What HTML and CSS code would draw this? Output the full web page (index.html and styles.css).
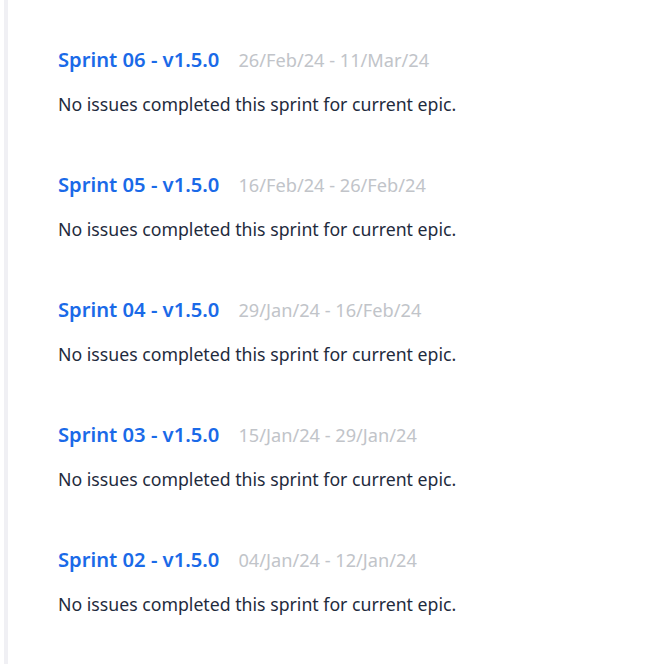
FILE: index.html
```html
<!DOCTYPE html>
<html>
<head>
<meta charset="utf-8">
<link rel="stylesheet" href="styles.css">
</head>
<body>
<div class="panel">
  <section class="sprint">
    <div class="head"><span class="name">Sprint 06 - v1.5.0</span><span class="dates">26/Feb/24 - 11/Mar/24</span></div>
    <p class="empty">No issues completed this sprint for current epic.</p>
  </section>
  <section class="sprint">
    <div class="head"><span class="name">Sprint 05 - v1.5.0</span><span class="dates">16/Feb/24 - 26/Feb/24</span></div>
    <p class="empty">No issues completed this sprint for current epic.</p>
  </section>
  <section class="sprint">
    <div class="head"><span class="name">Sprint 04 - v1.5.0</span><span class="dates">29/Jan/24 - 16/Feb/24</span></div>
    <p class="empty">No issues completed this sprint for current epic.</p>
  </section>
  <section class="sprint">
    <div class="head"><span class="name">Sprint 03 - v1.5.0</span><span class="dates">15/Jan/24 - 29/Jan/24</span></div>
    <p class="empty">No issues completed this sprint for current epic.</p>
  </section>
  <section class="sprint">
    <div class="head"><span class="name">Sprint 02 - v1.5.0</span><span class="dates">04/Jan/24 - 12/Jan/24</span></div>
    <p class="empty">No issues completed this sprint for current epic.</p>
  </section>
</div>
</body>
</html>
```
FILE: styles.css
```css
html, body {
  margin: 0;
  padding: 0;
  background: #ffffff;
}
body {
  font-family: "Noto Sans", "Open Sans", sans-serif;
}
.panel {
  margin-left: 4px;
  border-left: 4px solid #f0f0f4;
  padding: 45px 0 0 50px;
  min-height: 664px;
  box-sizing: border-box;
}
.sprint {
  height: 125px;
}
.head {
  display: flex;
  align-items: baseline;
  gap: 19px;
  line-height: 28px;
}
.name {
  font-size: 20.2px;
  font-weight: 600;
  color: #1a6ae8;
}
.dates {
  font-size: 18.2px;
  color: #c1c4c9;
}
.empty {
  margin: 18px 0 0;
  font-size: 17.7px;
  line-height: 24px;
  color: #1f2b3d;
}
```
